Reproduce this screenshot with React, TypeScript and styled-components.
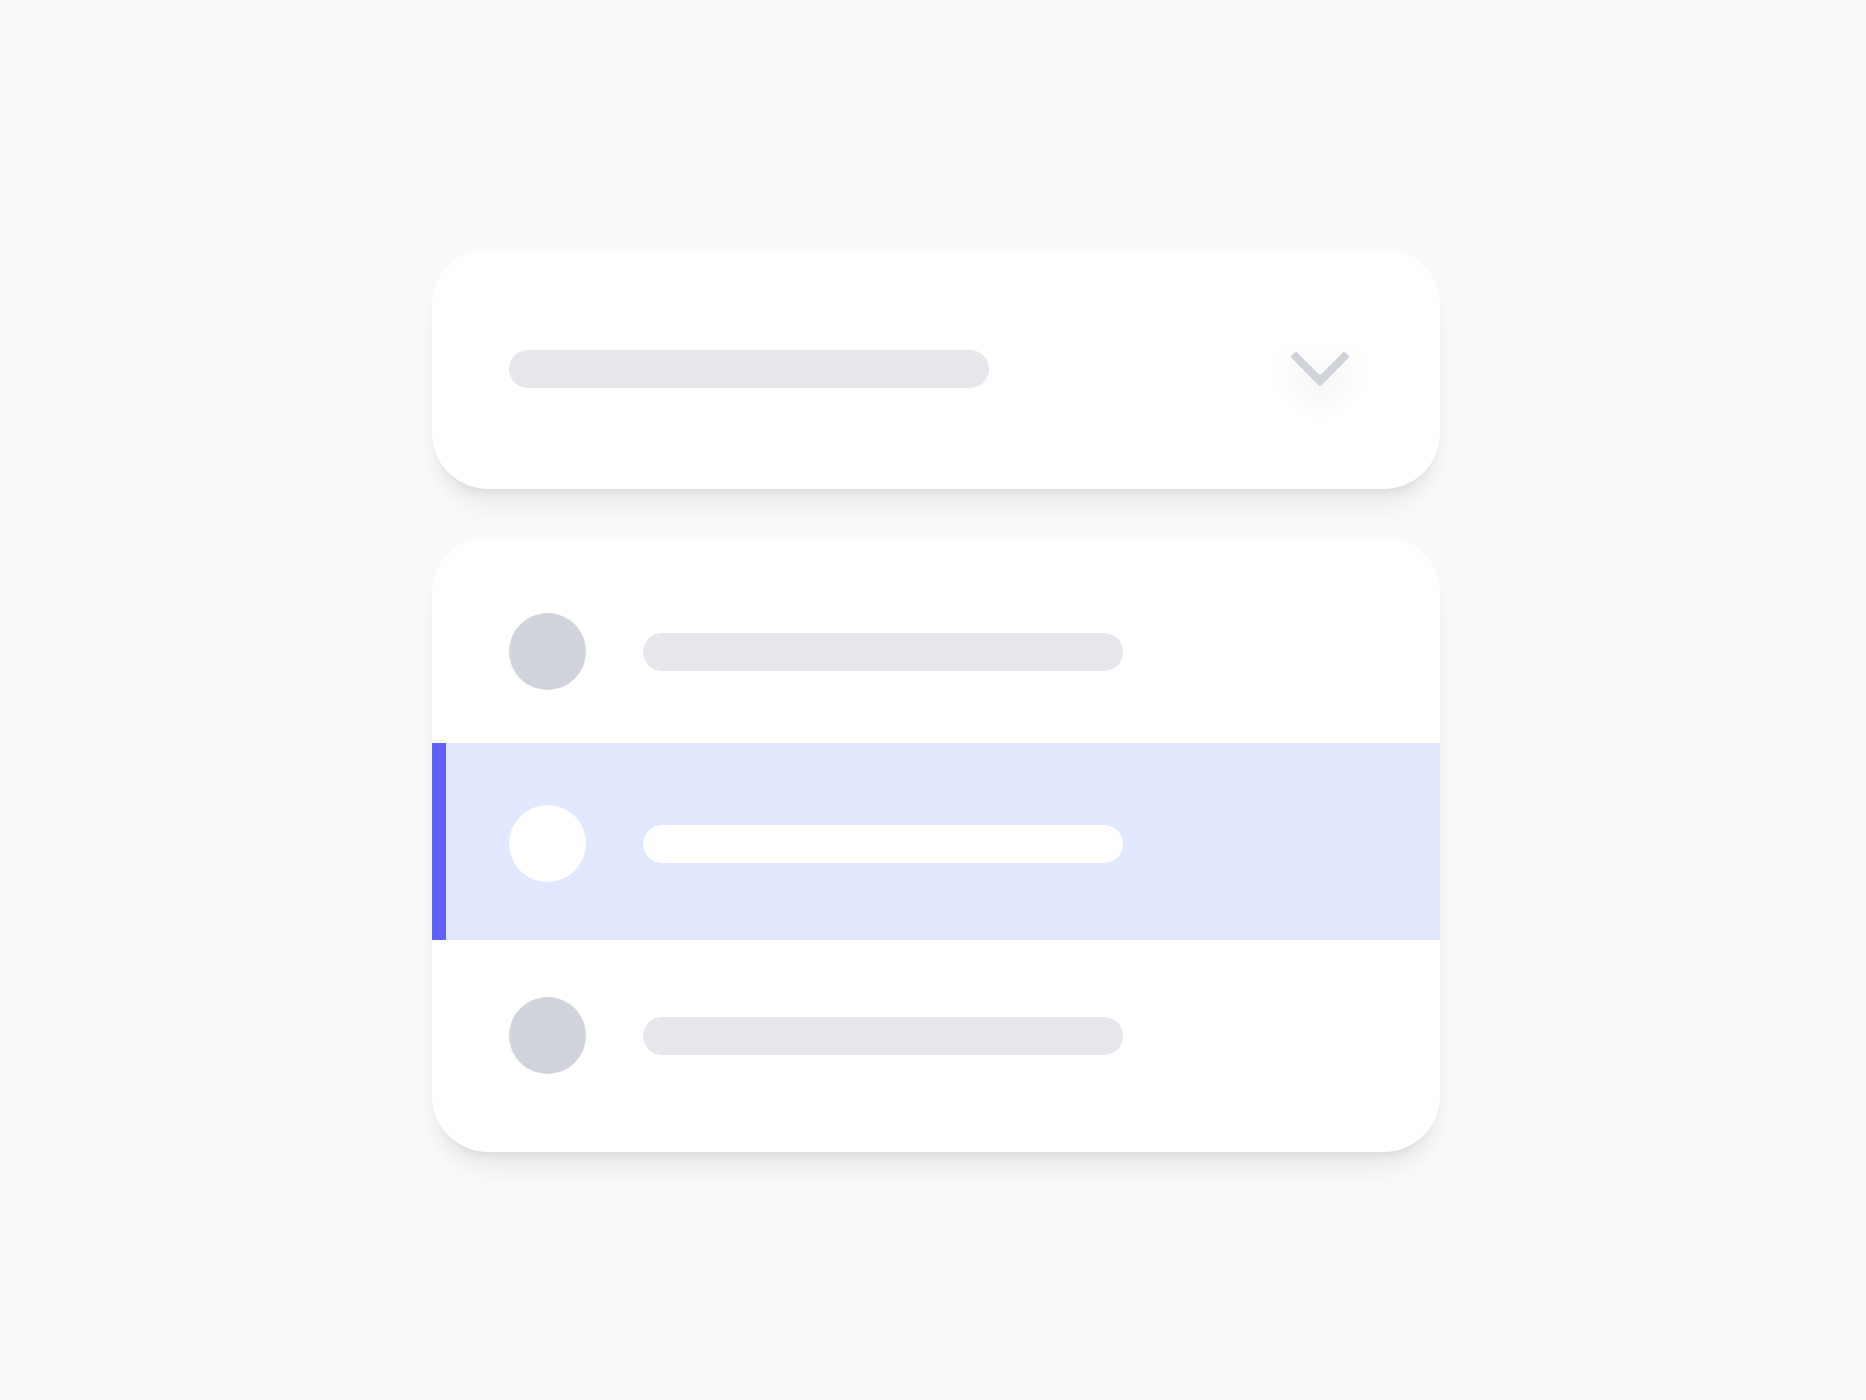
import styled, { createGlobalStyle } from 'styled-components';

interface Option {
  id: number;
  active?: boolean;
}

const options: Option[] = [{ id: 1 }, { id: 2, active: true }, { id: 3 }];

const GlobalStyle = createGlobalStyle`
  html, body {
    margin: 0;
    padding: 0;
    background: #f9fafb;
    font-family: Inter, 'Noto Sans', sans-serif;
  }
`;

const App = () => {
  return (
    <>
      <GlobalStyle />
      <PageStyle>
        <StackStyle>
          <TriggerStyle>
            <LineStyle $width={480} />
            <ChevronStyle viewBox="0 0 62 38" width={62} height={38}>
              <polyline points="4,4 31,31 58,4" fill="none" stroke="#d1d5db" strokeWidth={8} />
            </ChevronStyle>
          </TriggerStyle>

          <MenuStyle>
            {options.map(option => (
              <OptionStyle key={option.id} $active={!!option.active}>
                <DotStyle $active={!!option.active} />
                <LineStyle $width={480} $light={!!option.active} />
              </OptionStyle>
            ))}
          </MenuStyle>
        </StackStyle>
      </PageStyle>
    </>
  );
};

const PageStyle = styled.div`
  min-height: 1400px;
  display: flex;
  align-items: center;
  justify-content: center;
  padding-left: 6px;
  box-sizing: border-box;
`;

const StackStyle = styled.div`
  width: 1008px;
  display: flex;
  flex-direction: column;
  gap: 48px;
`;

const CardStyle = styled.div`
  background: #fff;
  border-radius: 56px;
  box-shadow:
    0 20px 25px -5px rgba(0, 0, 0, 0.08),
    0 8px 10px -6px rgba(0, 0, 0, 0.08);
`;

const TriggerStyle = styled(CardStyle)`
  height: 240px;
  display: flex;
  align-items: center;
  justify-content: space-between;
  padding: 0 89px 0 77px;
  box-sizing: border-box;
`;

const ChevronStyle = styled.svg`
  display: block;
  overflow: visible;
  filter: drop-shadow(0 12px 14px rgba(0, 0, 0, 0.1));
`;

const MenuStyle = styled(CardStyle)`
  padding: 19px 0 20px;
  overflow: hidden;
`;

const OptionStyle = styled.div<{ $active: boolean }>`
  height: 192px;
  display: flex;
  align-items: center;
  gap: 57px;
  padding-left: 77px;
  background: ${({ $active }) => ($active ? '#e0e7ff' : 'transparent')};
  box-shadow: ${({ $active }) => ($active ? 'inset 14px 0 0 #6161ff' : 'none')};
  margin-top: ${({ $active }) => ($active ? '-5px' : '0')};
  padding-top: ${({ $active }) => ($active ? '5px' : '0')};
`;

const DotStyle = styled.div<{ $active: boolean }>`
  width: 77px;
  height: 77px;
  border-radius: 50%;
  flex-shrink: 0;
  background: ${({ $active }) => ($active ? '#fff' : '#d1d5db')};
`;

const LineStyle = styled.div<{ $width: number; $light?: boolean }>`
  width: ${({ $width }) => $width}px;
  height: 38px;
  border-radius: 19px;
  background: ${({ $light }) => ($light ? '#fff' : '#e5e7eb')};
`;

export default App;
